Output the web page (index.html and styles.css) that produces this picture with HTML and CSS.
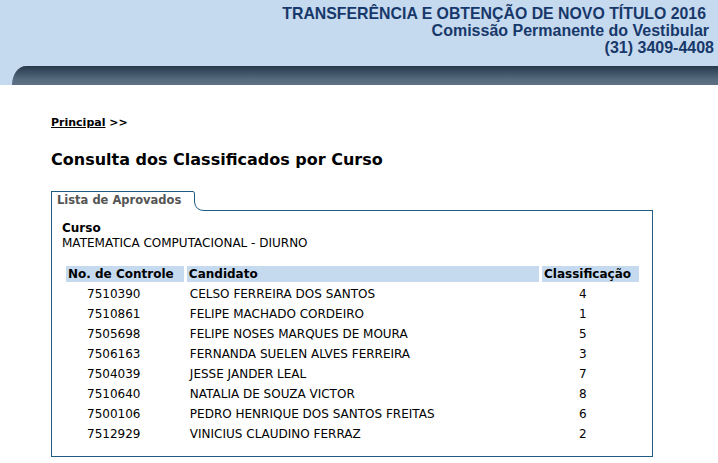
FILE: index.html
```html
<!DOCTYPE html>
<html lang="pt-BR">
<head>
<meta charset="utf-8">
<title>Consulta dos Classificados por Curso</title>
<link rel="stylesheet" href="styles.css">
</head>
<body>
<div class="header">
  <div class="titles">
    <div class="t1">TRANSFERÊNCIA E OBTENÇÃO DE NOVO TÍTULO 2016</div>
    <div class="t2">Comissão Permanente do Vestibular</div>
    <div class="t3">(31) 3409-4408</div>
  </div>
  <div class="barwrap"><div class="bar"></div></div>
</div>
<div class="content">
  <div class="crumb"><a href="#">Principal</a> &gt;&gt;</div>
  <h1 class="title">Consulta dos Classificados por Curso</h1>
  <div class="fieldset">
    <div class="tabrow">
      <div class="tab">Lista de Aprovados</div>
      <svg class="curve" width="14" height="20" viewBox="0 0 14 20"><path d="M0 0.5 H1 Q2.5 0.5 2.5 3 V11 Q3.5 19.5 12 19.5 H14" fill="none" stroke="#1f5c84" stroke-width="1"/></svg>
      <div class="tabfill"></div>
    </div>
    <div class="box">
      <div class="label">Curso</div>
      <div class="course">MATEMATICA COMPUTACIONAL - DIURNO</div>
      <table class="list">
        <thead>
          <tr><th class="c1">No. de Controle</th><th class="c2">Candidato</th><th class="c3">Classificação</th></tr>
        </thead>
        <tbody>
          <tr><td class="c1">7510390</td><td class="c2">CELSO FERREIRA DOS SANTOS</td><td class="c3">4</td></tr>
          <tr><td class="c1">7510861</td><td class="c2">FELIPE MACHADO CORDEIRO</td><td class="c3">1</td></tr>
          <tr><td class="c1">7505698</td><td class="c2">FELIPE NOSES MARQUES DE MOURA</td><td class="c3">5</td></tr>
          <tr><td class="c1">7506163</td><td class="c2">FERNANDA SUELEN ALVES FERREIRA</td><td class="c3">3</td></tr>
          <tr><td class="c1">7504039</td><td class="c2">JESSE JANDER LEAL</td><td class="c3">7</td></tr>
          <tr><td class="c1">7510640</td><td class="c2">NATALIA DE SOUZA VICTOR</td><td class="c3">8</td></tr>
          <tr><td class="c1">7500106</td><td class="c2">PEDRO HENRIQUE DOS SANTOS FREITAS</td><td class="c3">6</td></tr>
          <tr><td class="c1">7512929</td><td class="c2">VINICIUS CLAUDINO FERRAZ</td><td class="c3">2</td></tr>
        </tbody>
      </table>
    </div>
  </div>
</div>
</body>
</html>
```
FILE: styles.css
```css
html, body {
  margin: 0;
  padding: 0;
  background: #ffffff;
}
body {
  font-family: "DejaVu Sans", Verdana, sans-serif;
  font-size: 12px;
  color: #000000;
}
.header {
  background: #c6daef;
}
.titles {
  height: 66px;
  box-sizing: border-box;
  padding-top: 5px;
  text-align: right;
  font-family: "Liberation Sans", Arial, sans-serif;
  font-weight: bold;
  color: #17386a;
  font-size: 16px;
  line-height: 17px;
}
.t1 { padding-right: 12px; font-size: 15.85px; }
.t2 { padding-right: 9px; }
.t3 { padding-right: 4px; }
.barwrap {
  padding-left: 12px;
  background: #c6daef;
}
.bar {
  height: 19px;
  border-top-left-radius: 14px 19px;
  background: linear-gradient(to bottom, #27394a 0%, #3e5266 35%, #566a7e 70%, #5d7084 100%);
}
.content {
  padding: 31px 0 0 51px;
}
.crumb {
  font-size: 11px;
  font-weight: bold;
  line-height: 14px;
}
.crumb a {
  color: #000000;
  text-decoration: underline;
}
.title {
  margin: 20px 0 0 0;
  font-size: 16px;
  line-height: 20px;
  font-weight: bold;
}
.fieldset {
  width: 602px;
  margin-top: 21px;
}
.tabrow {
  display: flex;
  height: 20px;
}
.tab {
  border-top: 1px solid #1f5c84;
  border-left: 1px solid #1f5c84;
  padding: 1px 0 0 5px;
  width: 135px;
  color: #555555;
  font-weight: bold;
  font-size: 11.5px;
  line-height: 14px;
}
.curve {
  display: block;
  flex: none;
}
.tabfill {
  flex: 1;
  border-bottom: 1px solid #1f5c84;
}
.box {
  border: 1px solid #1f5c84;
  border-top: none;
  padding: 10px 10px 10px 10px;
}
.label {
  font-weight: bold;
  line-height: 15px;
}
.course {
  line-height: 15px;
}
.list {
  margin: 11px 0 0 1px;
  border-collapse: separate;
  border-spacing: 3px 4px;
}
.list th {
  background: #c6daef;
  font-weight: bold;
  text-align: left;
  padding: 0 2px;
  height: 16px;
  line-height: 16px;
}
.list td {
  padding: 0 2px;
  height: 16px;
  line-height: 16px;
}
.list .c1 { width: 114px; }
.list .c2 { width: 347px; }
.list .c3 { width: 93px; }
.list td.c1 { padding-left: 21px; width: 95px; }
.list td.c2 { padding-left: 3px; width: 348px; }
.list td.c3 { padding-left: 37px; width: 58px; }
```
